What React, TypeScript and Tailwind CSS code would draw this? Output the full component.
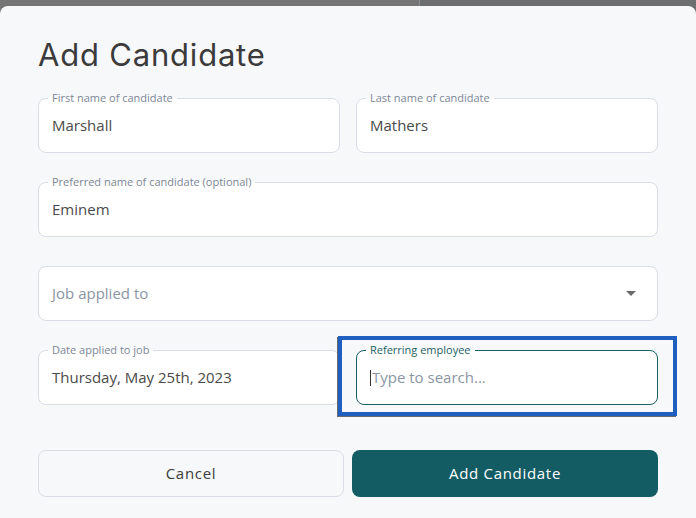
import React from 'react';

const body = '"Open Sans", "Noto Sans", sans-serif';

function Field({
    label,
    value,
    placeholder,
    focused,
    className = '',
}: {
    label?: string;
    value?: string;
    placeholder?: string;
    focused?: boolean;
    className?: string;
}) {
    return (
        <div
            className={`relative h-[55px] rounded-lg border bg-white flex items-center pl-[13px] ${
                focused ? 'border-[#1b5f66]' : 'border-[#d9dee6]'
            } ${className}`}
        >
            {label && (
                <span
                    className={`absolute -top-[8px] left-[9px] px-[4px] text-[11px] leading-[14px] bg-[linear-gradient(to_bottom,#f7f8fa_50%,#ffffff_50%)] ${
                        focused ? 'text-[#1b5f66]' : 'text-[#7d8797]'
                    }`}
                >
                    {label}
                </span>
            )}
            {value ? (
                <span className="text-[15px] text-[#4a4a4a]">{value}</span>
            ) : (
                <span className="flex items-center text-[15px] text-[#8b95a4]">
                    {focused && <span className="w-px h-[16px] bg-[#333] mr-[1px]" />}
                    {placeholder}
                </span>
            )}
        </div>
    );
}

export default function App() {
    return (
        <div
            className="w-[696px] h-[518px] overflow-hidden pt-[6px] bg-[linear-gradient(to_right,#757575_419px,#8c8c8c_419px,#8c8c8c_420px,#6c6f70_420px)]"
            style={{ fontFamily: body }}
        >
            <div className="h-[512px] rounded-t-[8px] bg-[#f7f8fa] px-[38px]">
                {/* Title */}
                <h1
                    className="pt-[31px] text-[31px] leading-[36px] text-[#3b3b3b] tracking-[0.8px]"
                    style={{ fontFamily: 'Inter, sans-serif' }}
                >
                    Add Candidate
                </h1>

                {/* Form fields */}
                <div className="mt-[25px] grid grid-cols-2 gap-x-4 gap-y-[29px]">
                    <Field label="First name of candidate" value="Marshall" />
                    <Field label="Last name of candidate" value="Mathers" />
                    <Field label="Preferred name of candidate (optional)" value="Eminem" className="col-span-2" />
                    <div className="col-span-2 relative h-[55px] rounded-lg border border-[#d9dee6] bg-white flex items-center justify-between pl-[13px] pr-[21px]">
                        <span className="text-[15px] text-[#8b95a4]">Job applied to</span>
                        <svg width="10" height="5" viewBox="0 0 10 5">
                            <path d="M0 0h10L5 5z" fill="#6a6a6a" />
                        </svg>
                    </div>
                    <Field label="Date applied to job" value="Thursday, May 25th, 2023" />
                    <div className="relative">
                        <Field label="Referring employee" placeholder="Type to search..." focused />
                        {/* highlight frame */}
                        <div className="absolute -left-[18px] -right-[19px] -top-[14px] -bottom-[11px] border-4 border-[#1f5fc0] shadow-[-1px_1px_0_#6b6b6b] pointer-events-none" />
                    </div>
                </div>

                {/* Actions */}
                <div className="mt-[45px] grid grid-cols-2 gap-2">
                    <button className="h-[47px] rounded-lg border border-[#d9dee6] bg-[#f7f8fa] text-[15px] font-medium tracking-[0.7px] text-[#3b3b3b]">
                        Cancel
                    </button>
                    <button className="h-[47px] rounded-lg bg-[#135c64] text-[15px] font-medium tracking-[0.7px] text-white">
                        Add Candidate
                    </button>
                </div>
            </div>
        </div>
    );
}
